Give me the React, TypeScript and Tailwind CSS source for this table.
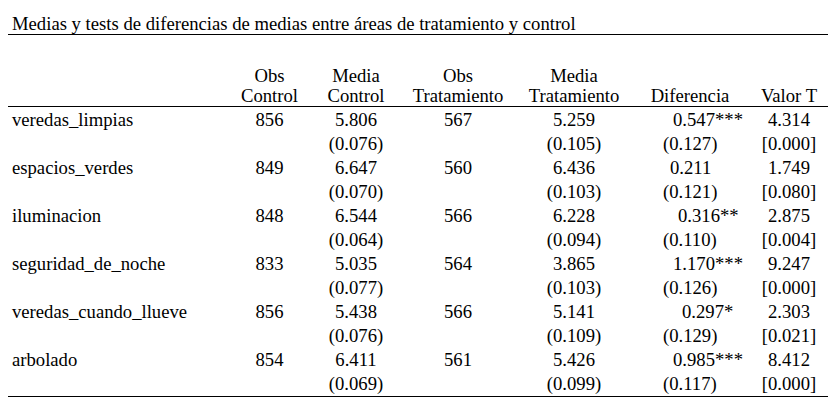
import React from "react";

type Row = {
  label: string;
  oc: string;
  mc: string;
  mcse: string;
  ot: string;
  mt: string;
  mtse: string;
  dif: string;
  difPl: string;
  difse: string;
  t: string;
  p: string;
};

const rows: Row[] = [
  { label: "veredas_limpias", oc: "856", mc: "5.806", mcse: "(0.076)", ot: "567", mt: "5.259", mtse: "(0.105)", dif: "0.547***", difPl: "pl-[43px]", difse: "(0.127)", t: "4.314", p: "[0.000]" },
  { label: "espacios_verdes", oc: "849", mc: "6.647", mcse: "(0.070)", ot: "560", mt: "6.436", mtse: "(0.103)", dif: "0.211", difPl: "pl-[40px]", difse: "(0.121)", t: "1.749", p: "[0.080]" },
  { label: "iluminacion", oc: "848", mc: "6.544", mcse: "(0.064)", ot: "566", mt: "6.228", mtse: "(0.094)", dif: "0.316**", difPl: "pl-[48px]", difse: "(0.110)", t: "2.875", p: "[0.004]" },
  { label: "seguridad_de_noche", oc: "833", mc: "5.035", mcse: "(0.077)", ot: "564", mt: "3.865", mtse: "(0.103)", dif: "1.170***", difPl: "pl-[43px]", difse: "(0.126)", t: "9.247", p: "[0.000]" },
  { label: "veredas_cuando_llueve", oc: "856", mc: "5.438", mcse: "(0.076)", ot: "566", mt: "5.141", mtse: "(0.109)", dif: "0.297*", difPl: "pl-[52px]", difse: "(0.129)", t: "2.303", p: "[0.021]" },
  { label: "arbolado", oc: "854", mc: "6.411", mcse: "(0.069)", ot: "561", mt: "5.426", mtse: "(0.099)", dif: "0.985***", difPl: "pl-[43px]", difse: "(0.117)", t: "8.412", p: "[0.000]" },
];

const grid = "grid grid-cols-[217px_89px_84px_120px_112px_120px_78px]";
const row = `${grid} h-[24px] pt-[2px]`;

export default function App() {
  return (
    <div
      className="w-[840px] h-[420px] bg-white text-black pt-[14px] pl-[8px]"
      style={{ fontFamily: "Liberation Serif, serif" }}
    >
      <div className="w-[820px] text-[18.67px] leading-[20px] whitespace-nowrap">
        <div className="border-b border-black pl-[4px]">
          Medias y tests de diferencias de medias entre áreas de tratamiento y control
        </div>
        <div className={`${grid} pt-[31px] border-b border-black`}>
          <div />
          <div className="flex flex-col items-center"><span>Obs</span><span>Control</span></div>
          <div className="flex flex-col items-center"><span>Media</span><span>Control</span></div>
          <div className="flex flex-col items-center"><span>Obs</span><span>Tratamiento</span></div>
          <div className="flex flex-col items-center"><span>Media</span><span>Tratamiento</span></div>
          <div className="flex flex-col items-center justify-end"><span>Diferencia</span></div>
          <div className="flex flex-col items-center justify-end"><span>Valor T</span></div>
        </div>
        <div className="pt-[1px] border-b border-black">
          {rows.map((r) => (
            <React.Fragment key={r.label}>
              <div className={row}>
                <div className="pl-[4px]">{r.label}</div>
                <div className="flex justify-center">{r.oc}</div>
                <div className="flex justify-center">{r.mc}</div>
                <div className="flex justify-center">{r.ot}</div>
                <div className="flex justify-center">{r.mt}</div>
                <div className={r.difPl}>{r.dif}</div>
                <div className="flex justify-center">{r.t}</div>
              </div>
              <div className={row}>
                <div />
                <div />
                <div className="flex justify-center">{r.mcse}</div>
                <div />
                <div className="flex justify-center">{r.mtse}</div>
                <div className="pl-[33px]">{r.difse}</div>
                <div className="flex justify-center">{r.p}</div>
              </div>
            </React.Fragment>
          ))}
        </div>
      </div>
    </div>
  );
}
